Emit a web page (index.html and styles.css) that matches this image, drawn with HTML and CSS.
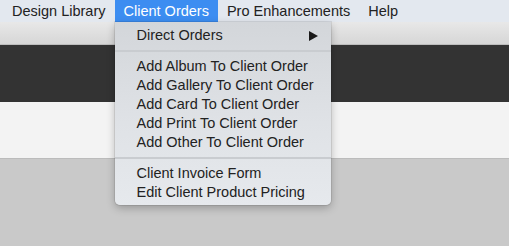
FILE: index.html
```html
<!DOCTYPE html>
<html lang="en">
<head>
  <meta charset="UTF-8" />
  <title>Client Orders Menu</title>
  <link rel="stylesheet" href="styles.css">
</head>
<body>
  <div class="menubar">
    <div class="menubar-item">Design Library</div>
    <div class="menubar-item open">
      Client Orders
      <!-- dropdown for the open menu -->
      <div class="dropdown">
        <div class="dropdown-item">Direct Orders
          <svg class="arrow" width="9" height="10" viewBox="0 0 9 10"><path d="M0 0 L9 5 L0 10 Z" fill="#1a1a1a"/></svg>
        </div>
        <div class="separator"></div>
        <div class="dropdown-item">Add Album To Client Order</div>
        <div class="dropdown-item">Add Gallery To Client Order</div>
        <div class="dropdown-item">Add Card To Client Order</div>
        <div class="dropdown-item">Add Print To Client Order</div>
        <div class="dropdown-item">Add Other To Client Order</div>
        <div class="separator"></div>
        <div class="dropdown-item">Client Invoice Form</div>
        <div class="dropdown-item">Edit Client Product Pricing</div>
      </div>
    </div>
    <div class="menubar-item">Pro Enhancements</div>
    <div class="menubar-item">Help</div>
  </div>

  <div class="toolbar"></div>
  <div class="dark-band"></div>
  <div class="light-band"></div>
  <div class="workspace"></div>
</body>
</html>
```

FILE: styles.css
```css
* {
  box-sizing: border-box;
}
body {
  margin: 0;
  font-family: 'Liberation Sans', Arial, sans-serif;
  font-size: 14.5px;
  color: #222;
  background: #c9c9c9;
  height: 246px;
  overflow: hidden;
  display: flex;
  flex-direction: column;
}
.menubar {
  height: 22px;
  background: #e3e8ef;
  display: flex;
  padding-left: 3px;
}
.menubar-item {
  position: relative;
  padding: 0 9px;
  line-height: 22px;
}
.menubar-item.open {
  background: #3c8df1;
  color: #fff;
}
.dropdown {
  position: absolute;
  top: 22px;
  left: 0;
  width: 216px;
  padding: 4px 0 3px;
  background: linear-gradient(#d3d6da, #dfe2e6 55%, #e6e9ed);
  border-radius: 0 0 5px 5px;
  box-shadow: 0 3px 8px rgba(0,0,0,0.25), 0 0 0 1px rgba(0,0,0,0.08);
  color: #222;
  z-index: 10;
}
.dropdown-item {
  display: flex;
  justify-content: space-between;
  align-items: center;
  height: 19px;
  line-height: 19px;
  padding: 0 13px 0 22px;
}
.separator {
  height: 2px;
  background: #c9ccd0;
  margin: 5px 0;
}
.toolbar {
  height: 23px;
  background: linear-gradient(#e8e8e8, #d6d6d6);
  border-bottom: 1px solid #bdbdbd;
}
.dark-band {
  height: 57px;
  background: #333;
}
.light-band {
  height: 57px;
  background: #f3f3f3;
  border-bottom: 1px solid #bbb;
}
.workspace {
  flex: 1;
}
```
